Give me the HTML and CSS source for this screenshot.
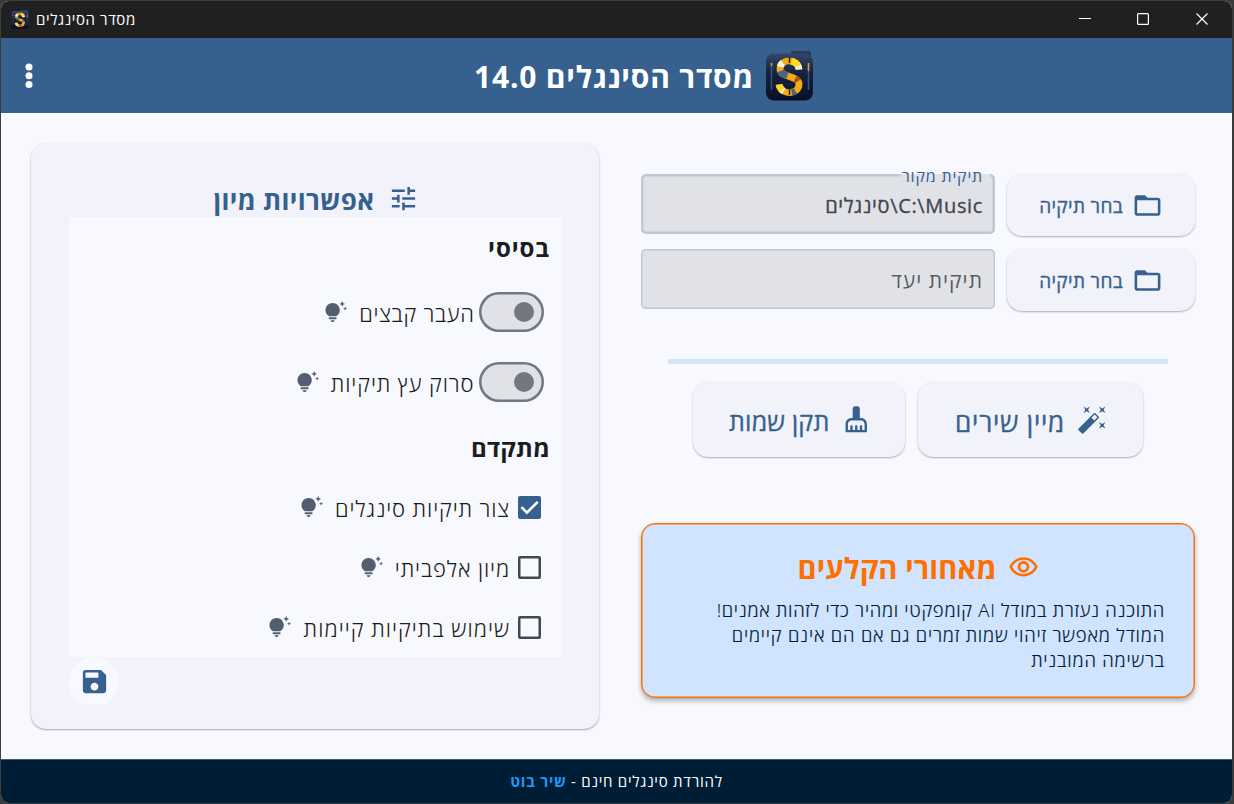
FILE: index.html
```html
<!DOCTYPE html>
<html lang="he" dir="rtl">
<head>
<meta charset="utf-8">
<title>מסדר הסינגלים</title>
<link rel="stylesheet" href="styles.css">
</head>
<body>
<svg width="0" height="0" class="defs" aria-hidden="true">
  <defs>
    <linearGradient id="tile" x1="0" y1="0" x2="0" y2="1"><stop offset="0" stop-color="#34466b"/><stop offset=".4" stop-color="#17233f"/><stop offset="1" stop-color="#081027"/></linearGradient>
    <symbol id="logo" viewBox="0 0 47 50">
      <path d="M25 4V2q0-2 2-2h16q2 0 2 2v6H25z" fill="#243a62"/>
      <rect x="0" y="2.500" width="47" height="47" rx="8" fill="url(#tile)"/>
      <path d="M5.500 13v26M42.500 13v26" stroke="#3c5278" stroke-width="1.500"/>
      <path d="M5.500 12v3M42.500 12v8" stroke="#e3a22a" stroke-width="1.500"/>
      <g fill="none" stroke-width="6.800">
        <path d="M33 18.500C32 7 14 7 14 18c0 9 18.500 6 19 15 0 11-18 11.500-20 .5" stroke="#f5ac13"/>
        <path d="M33 18.500C32 7 14 7 14 18c0 9 18.500 6 19 15 0 11-18 11.500-20 .5" stroke="#f7f1df" stroke-dasharray="4 17 5 48 4 60"/>
        <path d="M33 18.500C32 7 14 7 14 18c0 9 18.500 6 19 15 0 11-18 11.500-20 .5" stroke="#4b6488" stroke-dasharray="0 30 9 23 4 60"/>
        <path d="M33 18.500C32 7 14 7 14 18c0 9 18.500 6 19 15 0 11-18 11.500-20 .5" stroke="#ffd91f" stroke-dasharray="0 4 8 60"/>
        <path d="M33 18.500C32 7 14 7 14 18c0 9 18.500 6 19 15 0 11-18 11.500-20 .5" stroke="#a8531c" stroke-dasharray="0 47 4 60"/>
      </g>
      <path d="M23.500 6v6M23.500 38v6" stroke="#14203b" stroke-width="1.500"/>
    </symbol>
    <symbol id="tune" viewBox="0 0 24 24"><path d="M3 17v2h6v-2H3zM3 5v2h10V5H3zm10 16v-2h8v-2h-8v-2h-2v6h2zM7 9v2H3v2h4v2h2V9H7zm14 4v-2H11v2h10zm-6-4h2V7h4V5h-4V3h-2v6z"/></symbol>
    <symbol id="folder" viewBox="0 0 24 24"><path d="M20 6h-8l-2-2H4c-1.100 0-1.990.9-1.990 2L2 18c0 1.100.9 2 2 2h16c1.100 0 2-.9 2-2V8c0-1.100-.9-2-2-2zm0 12H4V8h16v10z"/></symbol>
    <symbol id="wand" viewBox="0 0 24 24"><path d="M7.500 5.600L10 7 8.600 4.500 10 2 7.500 3.400 5 2l1.400 2.500L5 7zm12 9.800L17 14l1.400 2.500L17 19l2.500-1.400L22 19l-1.400-2.500L22 14zM22 2l-2.500 1.400L17 2l1.400 2.500L17 7l2.500-1.400L22 7l-1.400-2.500zm-7.630 5.290c-.39-.39-1.020-.39-1.410 0L1.290 18.960c-.39.39-.39 1.020 0 1.410l2.340 2.340c.39.39 1.020.39 1.410 0L16.700 11.050c.39-.39.39-1.020 0-1.410l-2.330-2.350zm-1.030 5.490l-2.120-2.120 2.440-2.440 2.120 2.120-2.440 2.440z"/></symbol>
    <symbol id="broom" viewBox="0 0 24 24"><path d="M16 11h-1V3c0-1.100-.9-2-2-2h-2c-1.100 0-2 .9-2 2v8H8c-2.760 0-5 2.240-5 5v7h18v-7c0-2.760-2.240-5-5-5zm3 10h-2v-3c0-.55-.45-1-1-1s-1 .45-1 1v3h-2v-3c0-.55-.45-1-1-1s-1 .45-1 1v3H9v-3c0-.55-.45-1-1-1s-1 .45-1 1v3H5v-5c0-1.650 1.350-3 3-3h8c1.650 0 3 1.350 3 3v5z"/></symbol>
    <symbol id="bulb" viewBox="0 0 24 24"><path d="M7 20h4c0 1.100-.9 2-2 2s-2-.9-2-2zm-2-1h8v-2H5v2zm11.500-9.500c0 3.820-2.660 5.860-3.770 6.500H5.270c-1.110-.64-3.770-2.680-3.770-6.500C1.500 5.360 4.860 2 9 2s7.500 3.360 7.500 7.500zm4.870-2.130L20 8l1.370.63L22 10l.63-1.370L24 8l-1.370-.63L22 6l-.63 1.370zM19 6l.94-2.060L22 3l-2.060-.94L19 0l-.94 2.060L16 3l2.060.94L19 6z"/></symbol>
    <symbol id="save" viewBox="0 0 24 24"><path d="M17 3H5c-1.110 0-2 .9-2 2v14c0 1.100.89 2 2 2h14c1.100 0 2-.9 2-2V7l-4-4zm-5 16c-1.660 0-3-1.340-3-3s1.340-3 3-3 3 1.340 3 3-1.340 3-3 3zm3-10H5V5h10v4z"/></symbol>
    <symbol id="eye" viewBox="0 0 24 24"><path d="M12 6c3.790 0 7.170 2.130 8.820 5.500C19.170 14.870 15.790 17 12 17s-7.170-2.130-8.820-5.500C4.830 8.130 8.210 6 12 6m0-2C7 4 2.730 7.110 1 11.500 2.730 15.890 7 19 12 19s9.270-3.110 11-7.500C21.270 7.110 17 4 12 4zm0 5c1.380 0 2.500 1.120 2.500 2.500S13.380 14 12 14s-2.500-1.120-2.500-2.500S10.620 9 12 9m0-2c-2.480 0-4.500 2.020-4.500 4.500S9.520 16 12 16s4.500-2.020 4.500-4.500S14.480 7 12 7z"/></symbol>
  </defs>
</svg>
<div class="window">
  <div class="titlebar" dir="ltr">
    <svg class="app-icon"><use href="#logo"/></svg>
    <span class="app-name" dir="rtl">מסדר הסינגלים</span>
    <svg class="controls" viewBox="0 0 130 14" fill="none" stroke="#fff" stroke-width="1.200"><path d="M0 6.500h12"/><rect x="58.600" y="1.600" width="10.800" height="10.800" rx="1"/><path d="M117.500 1.500l11 11m0-11l-11 11"/></svg>
  </div>
  <header class="appbar" dir="ltr">
    <svg class="more" viewBox="0 0 8 26" fill="#fff"><circle cx="4" cy="4" r="3.500"/><circle cx="4" cy="12.800" r="3.500"/><circle cx="4" cy="21.500" r="3.500"/></svg>
    <h1 class="brand" dir="rtl"><svg class="brand-logo"><use href="#logo"/></svg><span>מסדר הסינגלים 14.0</span></h1>
  </header>
  <main class="content">
    <section class="work">
      <div class="field-row">
        <button class="btn pick"><svg class="icon"><use href="#folder"/></svg><span>בחר תיקיה</span></button>
        <div class="field filled"><span class="label">תיקית מקור</span><span class="value">C:\Music\סינגלים</span></div>
      </div>
      <div class="field-row">
        <button class="btn pick"><svg class="icon"><use href="#folder"/></svg><span>בחר תיקיה</span></button>
        <div class="field"><span class="hint">תיקית יעד</span></div>
      </div>
      <div class="progress"></div>
      <div class="actions">
        <button class="btn sort"><svg class="icon"><use href="#wand"/></svg><span>מיין שירים</span></button>
        <button class="btn fix"><svg class="icon"><use href="#broom"/></svg><span>תקן שמות</span></button>
      </div>
      <article class="info">
        <h2 class="info-title"><svg class="icon"><use href="#eye"/></svg><span>מאחורי הקלעים</span></h2>
        <p class="info-text"><span class="l1">התוכנה נעזרת במודל AI קומפקטי ומהיר כדי לזהות אמנים!</span><br><span class="l2">המודל מאפשר זיהוי שמות זמרים גם אם הם אינם קיימים</span><br><span class="l2">ברשימה המובנית</span></p>
      </article>
    </section>
    <section class="card">
      <h2 class="card-title"><svg class="icon"><use href="#tune"/></svg><span>אפשרויות מיון</span></h2>
      <div class="options">
        <h3 class="group basic">בסיסי</h3>
        <div class="opt tall"><span class="switch"></span><span class="opt-text snug">העבר קבצים</span><svg class="bulb"><use href="#bulb"/></svg></div>
        <div class="opt tall"><span class="switch"></span><span class="opt-text">סרוק עץ תיקיות</span><svg class="bulb"><use href="#bulb"/></svg></div>
        <h3 class="group">מתקדם</h3>
        <div class="opt"><span class="check on"><svg viewBox="0 0 23 23" fill="none" stroke="#fff" stroke-width="2.600"><path d="M3.500 11.200l5.400 5.400L19.700 5.800"/></svg></span><span class="opt-text even">צור תיקיות סינגלים</span><svg class="bulb"><use href="#bulb"/></svg></div>
        <div class="opt"><span class="check"></span><span class="opt-text even">מיון אלפביתי</span><svg class="bulb"><use href="#bulb"/></svg></div>
        <div class="opt"><span class="check"></span><span class="opt-text wide">שימוש בתיקיות קיימות</span><svg class="bulb"><use href="#bulb"/></svg></div>
      </div>
      <div class="save-clip"><button class="save"><svg class="icon"><use href="#save"/></svg></button></div>
    </section>
  </main>
  <footer class="footer"><span>להורדת סינגלים חינם - <a class="link">שיר בוט</a></span></footer>
</div>
</body>
</html>
```
FILE: styles.css
```css
* { box-sizing: border-box; }
body { margin: 0; width: 1234px; height: 804px; overflow: hidden; background: #3a3b3d; padding: 1px 2px 1px 1px; direction: ltr; font-family: "Open Sans", "Noto Sans", sans-serif; color: #191c20; }
.defs { position: absolute; }
h1, h2, h3, p { margin: 0; }
button { border: 0; padding: 0; font: inherit; }
span { white-space: nowrap; }
.window { direction: rtl; width: 1231px; height: 802px; border-radius: 8px; overflow: hidden; background: #f8f9ff; display: flex; flex-direction: column; }
.icon { width: 31px; height: 31px; fill: currentColor; flex: none; }

.titlebar { height: 37px; background: #202020; display: flex; align-items: center; color: #fff; padding: 0 23px 1px 10px; font-size: 15px; letter-spacing: .6px; }
.app-icon { width: 18px; height: 19px; margin-right: 7px; }
.app-name { flex: 1; text-align: left; line-height: 20px; margin-top: -1px; }
.controls { width: 130px; height: 14px; }

.appbar { height: 75px; background: #36618e; color: #fff; display: flex; align-items: center; padding-left: 23.500px; }
.more { width: 8px; height: 26px; }
.brand { width: 340px; margin-left: 440.500px; display: flex; align-items: center; gap: 12px; font-size: 30px; line-height: 40px; font-weight: 700; letter-spacing: .8px; }
.brand span { padding-top: 2px; }
.brand-logo { width: 47px; height: 50px; flex: none; }

.content { height: 646px; display: flex; justify-content: space-between; padding: 30px 37px 0 30px; }
.work { width: 554px; padding-top: 31px; display: flex; flex-direction: column; }
.btn { display: flex; align-items: center; color: #36618e; background: #f2f3fa; border-radius: 15px; box-shadow: 0 1px 2px rgba(0,0,0,.3); -webkit-text-stroke: .35px currentColor; }
.btn span { padding-top: 2px; }
.field-row { display: flex; gap: 12px; height: 75px; }
.pick { width: 188px; height: 62px; padding-right: 32px; gap: 9px; font-size: 19px; letter-spacing: .35px; }
.field { width: 354px; height: 60px; box-shadow: inset 0 0 0 1.500px #c3c7cf; border-radius: 5px; background: #e1e2e8; color: #5b5e63; padding: 2px 12px 0; display: flex; align-items: center; font-size: 21px; letter-spacing: 1px; position: relative; }
.filled { box-shadow: inset 0 0 0 2.500px #c3c7cf; color: #43474e; font-size: 20px; letter-spacing: .65px; }
.value { -webkit-text-stroke: .35px currentColor; }
.label { position: absolute; top: -9px; right: 5px; line-height: 22px; padding: 0 7px 0 1px; font-size: 16px; letter-spacing: .8px; color: #36618e; background: linear-gradient(#f8f9ff 9px, #e1e2e8 9px); }
.progress { width: 500px; height: 5px; margin: 34.500px auto 0; background: #d6e3f7; }
.actions { display: flex; gap: 13px; justify-content: center; margin-top: 18.500px; }
.sort { width: 225px; height: 75px; padding-right: 35px; gap: 12px; font-size: 26px; letter-spacing: .8px; }
.sort span { padding-top: 4px; }
.fix { width: 212px; height: 75px; padding-right: 35px; gap: 12px; font-size: 25px; letter-spacing: .2px; }
.fix .icon { width: 28.500px; height: 28.500px; }
.info { margin-top: 66px; height: 175px; border: 1px solid #ff6f00; border-radius: 14px; background: #d1e4ff; box-shadow: 0 3px 5px rgba(0,0,0,.3), inset 0 0 0 .5px #ff6f00; padding: 23px 29px 0; }
.info-title { display: flex; justify-content: center; align-items: center; gap: 11px; height: 40px; font-size: 29px; letter-spacing: .15px; color: #ff6f00; }
.info-text { margin-top: 10px; font-size: 18.500px; line-height: 25px; font-weight: 300; color: #001d36; -webkit-text-stroke: .15px currentColor; }
.l1 { letter-spacing: .7px; }
.l2 { letter-spacing: .8px; }

.card { width: 568px; height: 586px; border-radius: 15px; background: #f2f3fa; box-shadow: 0 1px 2px rgba(0,0,0,.35); padding: 37px 37px 0 38px; }
.card-title { height: 37px; display: flex; align-items: center; justify-content: center; gap: 13px; padding-left: 1px; color: #36618e; font-size: 26px; line-height: 37px; letter-spacing: .35px; }
.card-title span { padding-top: 4px; }
.options { width: 493px; height: 440px; background: #f8f9ff; }
.group { height: 60px; line-height: 62px; padding-right: 12px; font-size: 24px; letter-spacing: .3px; }
.basic { letter-spacing: .9px; }
.opt { height: 60px; display: flex; align-items: center; padding-right: 21px; }
.opt.tall { height: 70px; padding-right: 18px; }
.opt-text { font-size: 22px; font-weight: 300; margin: 1px 8px 0 12px; line-height: 30px; letter-spacing: .9px; }
.snug { letter-spacing: .7px; }
.even { letter-spacing: .87px; }
.wide { letter-spacing: 1.020px; margin-left: 13px; }
.tall .opt-text { margin-right: 4.500px; }
.switch { width: 65px; height: 40px; box-shadow: inset 0 0 0 2.500px #74777f; border-radius: 20px; background: #e1e2e8; display: flex; align-items: center; padding-right: 10px; }
.switch::before { content: ""; width: 20px; height: 20px; border-radius: 50%; background: #74777f; }
.check { width: 23px; height: 23px; box-shadow: inset 0 0 0 2.500px #43474e; border-radius: 2px; flex: none; }
.check.on { box-shadow: none; background: #36618e; }
.check svg { display: block; width: 23px; height: 23px; }
.bulb { width: 23px; height: 23px; fill: #535f70; }
.save-clip { width: 493px; height: 47px; overflow: hidden; display: flex; justify-content: flex-end; }
.save { width: 50px; height: 50px; border-radius: 50%; background: #f8f9ff; color: #36618e; display: flex; align-items: center; justify-content: center; padding-bottom: 1px; }

.footer { height: 44px; background: #001d36; border-top: 1px solid #43586b; color: #fff; display: flex; align-items: center; justify-content: center; font-size: 15px; letter-spacing: .75px; padding-bottom: 1px; }
.link { color: #2196f3; font-weight: 700; }
```
